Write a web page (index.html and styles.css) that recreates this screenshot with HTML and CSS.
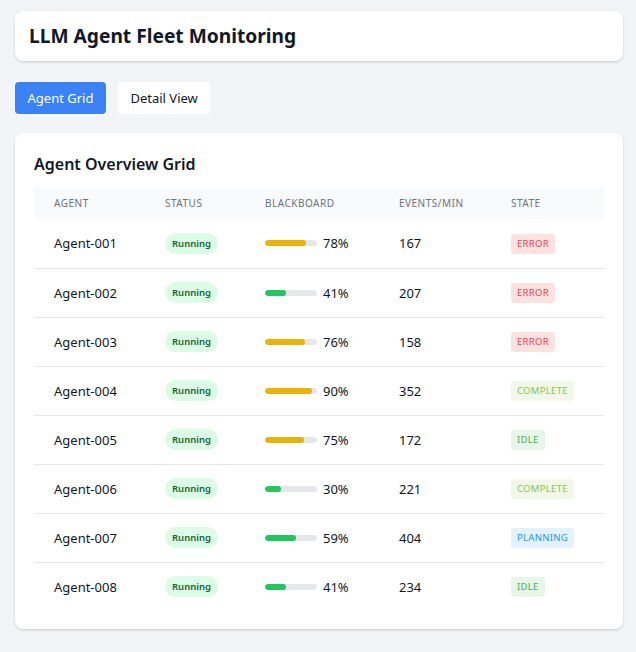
FILE: index.html
```html
<!DOCTYPE html>
<html lang="en">
<head>
<meta charset="utf-8">
<title>LLM Agent Fleet Monitoring</title>
<link rel="stylesheet" href="styles.css">
</head>
<body>
<div class="page">
  <header class="topbar">
    <h1>LLM Agent Fleet Monitoring</h1>
  </header>
  <nav class="tabs">
    <button class="tab active">Agent Grid</button>
    <button class="tab">Detail View</button>
  </nav>
  <section class="card">
    <h2>Agent Overview Grid</h2>
    <table class="grid">
      <thead>
        <tr><th>Agent</th><th>Status</th><th>Blackboard</th><th>Events/min</th><th>State</th></tr>
      </thead>
      <tbody>
        <tr><td>Agent-001</td><td><span class="pill">Running</span></td><td><div class="bb"><div class="bar"><div class="fill warn" style="width:78%"></div></div><span>78%</span></div></td><td>167</td><td><span class="state error">ERROR</span></td></tr>
        <tr><td>Agent-002</td><td><span class="pill">Running</span></td><td><div class="bb"><div class="bar"><div class="fill ok" style="width:41%"></div></div><span>41%</span></div></td><td>207</td><td><span class="state error">ERROR</span></td></tr>
        <tr><td>Agent-003</td><td><span class="pill">Running</span></td><td><div class="bb"><div class="bar"><div class="fill warn" style="width:76%"></div></div><span>76%</span></div></td><td>158</td><td><span class="state error">ERROR</span></td></tr>
        <tr><td>Agent-004</td><td><span class="pill">Running</span></td><td><div class="bb"><div class="bar"><div class="fill warn" style="width:90%"></div></div><span>90%</span></div></td><td>352</td><td><span class="state complete">COMPLETE</span></td></tr>
        <tr><td>Agent-005</td><td><span class="pill">Running</span></td><td><div class="bb"><div class="bar"><div class="fill warn" style="width:75%"></div></div><span>75%</span></div></td><td>172</td><td><span class="state idle">IDLE</span></td></tr>
        <tr><td>Agent-006</td><td><span class="pill">Running</span></td><td><div class="bb"><div class="bar"><div class="fill ok" style="width:30%"></div></div><span>30%</span></div></td><td>221</td><td><span class="state complete">COMPLETE</span></td></tr>
        <tr><td>Agent-007</td><td><span class="pill">Running</span></td><td><div class="bb"><div class="bar"><div class="fill ok" style="width:59%"></div></div><span>59%</span></div></td><td>404</td><td><span class="state planning">PLANNING</span></td></tr>
        <tr><td>Agent-008</td><td><span class="pill">Running</span></td><td><div class="bb"><div class="bar"><div class="fill ok" style="width:41%"></div></div><span>41%</span></div></td><td>234</td><td><span class="state idle">IDLE</span></td></tr>
      </tbody>
    </table>
  </section>
</div>
</body>
</html>
```
FILE: styles.css
```css
* { box-sizing: border-box; }
html, body { margin: 0; padding: 0; }
body {
  background: #f3f4f6;
  font-family: "Noto Sans", "Open Sans", sans-serif;
  color: #111827;
}
.page {
  padding: 11px 13px 20px 15px;
}
.topbar {
  background: #fff;
  border-radius: 8px;
  box-shadow: 0 1px 3px rgba(0,0,0,0.12), 0 1px 2px rgba(0,0,0,0.06);
  padding: 11px 14px;
}
.topbar h1 {
  margin: 0;
  font-size: 19.2px;
  line-height: 28px;
  font-weight: 700;
  color: #111827;
}
.tabs {
  display: flex;
  gap: 12px;
  margin-top: 21px;
}
.tab {
  font-family: inherit;
  font-size: 13px;
  line-height: 20px;
  height: 32px;
  padding: 6px 12.5px;
  border: none;
  border-radius: 4px;
  background: #fff;
  color: #111827;
}
.tab.active {
  background: #3b82f6;
  color: #fff;
}
.card {
  margin-top: 19px;
  background: #fff;
  border-radius: 8px;
  box-shadow: 0 1px 3px rgba(0,0,0,0.12), 0 1px 2px rgba(0,0,0,0.06);
  padding: 19px 19px 18px 19px;
}
.card h2 {
  margin: 0 0 11px 0;
  font-size: 16px;
  line-height: 24px;
  font-weight: 600;
  color: #111827;
}
.grid {
  width: 100%;
  border-collapse: collapse;
  table-layout: fixed;
}
.grid th:nth-child(1) { width: 131px; }
.grid th:nth-child(2) { width: 100px; }
.grid th:nth-child(3) { width: 134px; }
.grid th:nth-child(4) { width: 112px; }
.grid th {
  background: #f9fafb;
  text-align: left;
  font-size: 10px;
  font-weight: 400;
  letter-spacing: 0.5px;
  text-transform: uppercase;
  color: #6b7280;
  height: 32px;
  padding: 0 0 0 20px;
}
.grid td {
  height: 49px;
  padding: 0 0 0 20px;
  font-size: 13px;
  color: #111827;
  border-bottom: 1px solid #e5e7eb;
  vertical-align: middle;
}
.grid td:nth-child(n+2), .grid th:nth-child(n+2) { padding-left: 0; }
.grid tbody tr:last-child td { border-bottom: none; }
.pill {
  display: inline-block;
  background: #dcfce7;
  color: #166534;
  font-size: 9.5px;
  font-weight: 600;
  line-height: 21px;
  padding: 0 7px;
  border-radius: 11px;
}
.bb {
  display: flex;
  align-items: center;
  gap: 6px;
}
.bar {
  width: 52px;
  height: 6px;
  background: #e5e7eb;
  border-radius: 3px;
  overflow: hidden;
}
.fill { height: 100%; border-radius: 3px; }
.fill.warn { background: #eab308; }
.fill.ok { background: #22c55e; }
.state {
  display: inline-block;
  font-size: 9.5px;
  line-height: 20px;
  padding: 0 6px;
  border-radius: 3px;
  letter-spacing: 0.3px;
}
.state.error { background: #fee2e2; color: #ef4444; }
.state.complete { background: #f1f8e9; color: #8bc34a; }
.state.idle { background: #e8f5e9; color: #4caf50; }
.state.planning { background: #e3f2fd; color: #2196f3; }
```
